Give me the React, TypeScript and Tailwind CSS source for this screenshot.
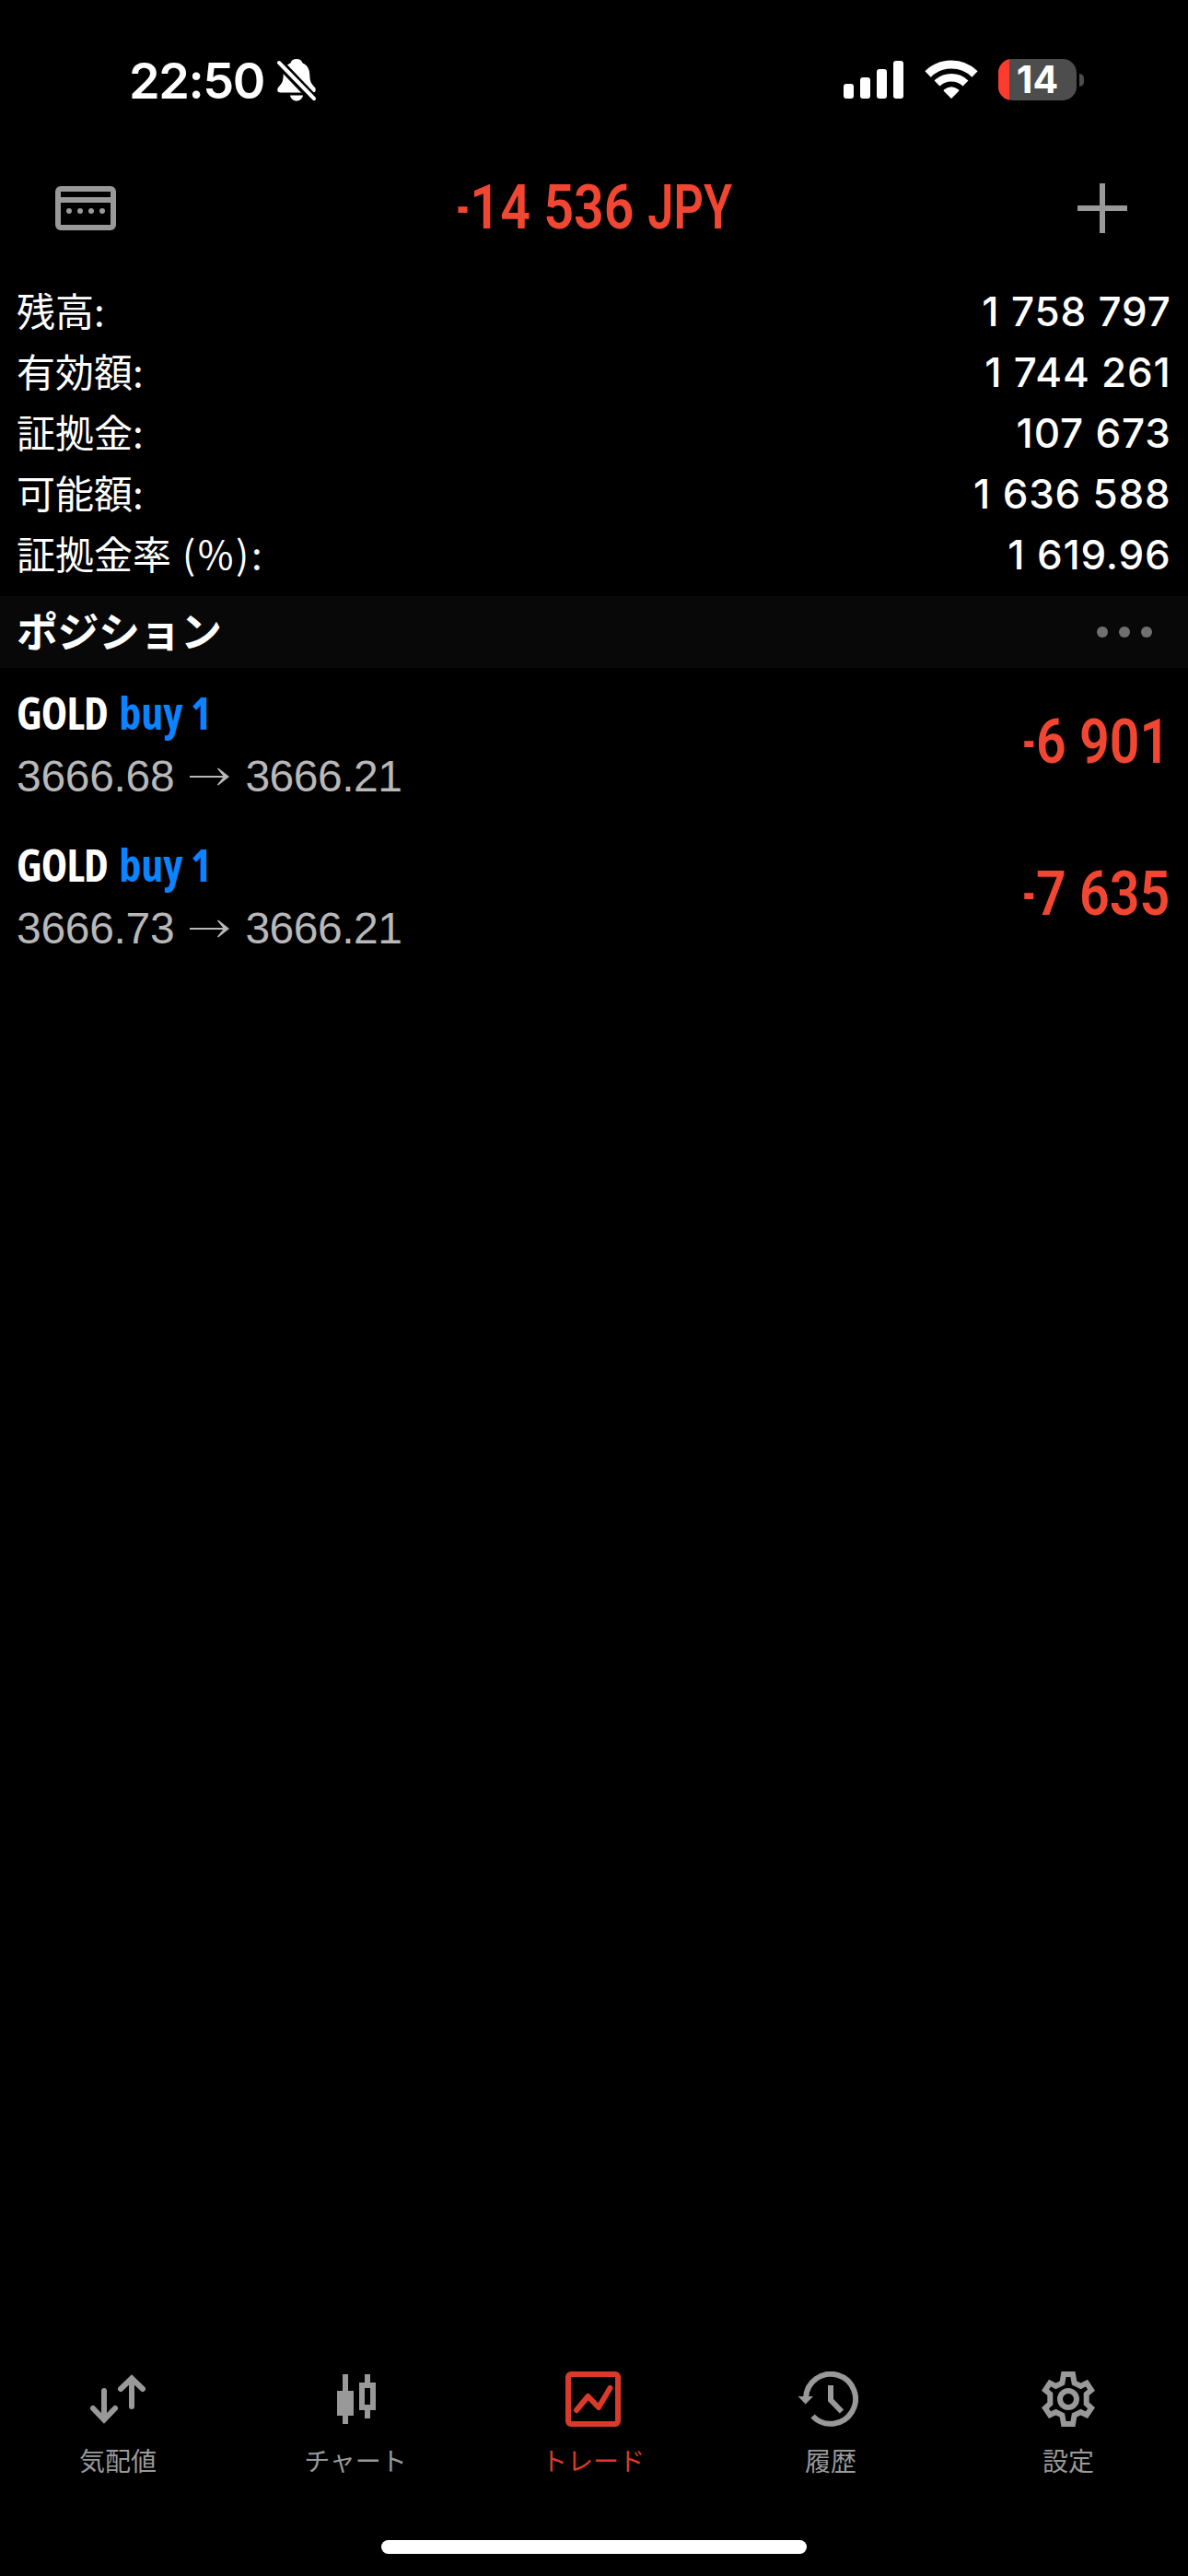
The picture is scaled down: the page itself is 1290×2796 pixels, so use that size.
import React from 'react';

interface SummaryRow {
  label: string;
  suffix?: string;
  value: string;
}

interface Position {
  symbol: string;
  side: string;
  open: string;
  current: string;
  profit: string;
}

const summary: SummaryRow[] = [
  { label: '残高:', value: '1 758 797' },
  { label: '有効額:', value: '1 744 261' },
  { label: '証拠金:', value: '107 673' },
  { label: '可能額:', value: '1 636 588' },
  { label: '証拠金率', suffix: ' (%):', value: '1 619.96' },
];

const positions: Position[] = [
  { symbol: 'GOLD', side: 'buy 1', open: '3666.68', current: '3666.21', profit: '6 901' },
  { symbol: 'GOLD', side: 'buy 1', open: '3666.73', current: '3666.21', profit: '7 635' },
];

const BellOffIcon = () => (
  <svg width="44" height="48" viewBox="0 0 44 48">
    <path
      fill="white"
      d="M22 1c-3.500 0-6 2-6.600 4.600C9.500 8 7.800 13 7.600 19.500 7.400 26 5.500 28 2.500 31.500 0 34.500 1.500 37.500 4.500 37.500h35c3 0 4.500-3 2-6C38.500 28 36.600 26 36.400 19.500 36.200 13 34.500 8 28.600 5.600 28 3 25.500 1 22 1z"
    />
    <path fill="white" d="M15 40.500h14c-.6 3.500-3.500 6-7 6s-6.400-2.500-7-6z" />
    <path d="M-2 0L42 46" stroke="black" strokeWidth="10" />
    <path d="M3 5L41 44" stroke="white" strokeWidth="4" strokeLinecap="round" />
  </svg>
);

const SignalIcon = () => (
  <svg className="mr-px" width="65" height="41" viewBox="0 0 65 41" fill="white">
    <rect x="0" y="25" width="11" height="16" rx="3" />
    <rect x="18" y="18" width="11" height="23" rx="3" />
    <rect x="36" y="9" width="11" height="32" rx="3" />
    <rect x="54" y="0" width="11" height="41" rx="3" />
  </svg>
);

const WifiIcon = () => (
  <svg width="58" height="43" viewBox="0 0 58 43" fill="none" stroke="white">
    <path d="M3.500 15.500A36.500 36.500 0 0 1 54.500 15.500" strokeWidth="9" />
    <path d="M13.500 25.500A22.300 22.300 0 0 1 44.500 25.500" strokeWidth="8.500" />
    <path d="M29 42L20.500 33.500Q20.500 32.500 21.500 32Q29 26.500 36.500 32Q37.500 32.500 37.500 33.500Z" fill="white" stroke="none" />
  </svg>
);

const Battery = () => (
  <div className="flex items-center">
    <div className="relative flex h-[45px] w-[85px] items-center justify-center">
      <div className="absolute inset-0 overflow-hidden rounded-[15px] bg-[#4d4d4d]">
        <div className="h-full w-3 bg-[#ff3b30]" />
      </div>
      <span className="relative text-[41px] font-bold leading-[45px] text-white">14</span>
    </div>
    <div className="ml-[3px] h-[14px] w-[5px] rounded-r-full bg-[#4d4d4d]" />
  </div>
);

const KeypadIcon = () => (
  <svg width="66" height="48" viewBox="0 0 66 48" fill="#999999">
    <rect x="3" y="3" width="60" height="42" rx="3" fill="none" stroke="#999999" strokeWidth="6" />
    <rect x="3" y="12" width="60" height="6" />
    <circle cx="15" cy="27" r="3" />
    <circle cx="27" cy="27" r="3" />
    <circle cx="39" cy="27" r="3" />
    <circle cx="51" cy="27" r="3" />
  </svg>
);

const PlusIcon = () => (
  <svg width="54" height="54" viewBox="0 0 54 54" stroke="#999999" strokeWidth="6">
    <path d="M27 0V54M0 27H54" />
  </svg>
);

const ArrowIcon = () => (
  <svg width="44" height="20" viewBox="0 0 44 20" fill="none" stroke="currentColor">
    <path d="M0 10H41" strokeWidth="2" />
    <path fill="currentColor" stroke="none" d="M43 10L31 0.500L30 1.500L37 10L30 18.500L31 19.500Z" />
  </svg>
);

const QuotesIcon = () => (
  <svg width="60" height="60" viewBox="0 0 60 60" fill="none" stroke="currentColor" strokeWidth="6" strokeLinecap="round">
    <path d="M15 21V52M3 40L15 52.500L27 40" />
    <path d="M45 38V8M33 19L45 7.500L57 19" />
  </svg>
);

const ChartIcon = () => (
  <svg width="60" height="60" viewBox="0 0 60 60" fill="currentColor">
    <path d="M16 3h6v18h6v27h-6v9h-6v-9h-6V21h6z" />
    <path fillRule="evenodd" d="M40 3h6v9h6v30h-6v9h-6v-9h-6V12h6zM40 18v18h6V18z" />
  </svg>
);

const TradeIcon = () => (
  <svg width="60" height="60" viewBox="0 0 60 60" fill="none" stroke="currentColor" strokeWidth="6">
    <rect x="3" y="3" width="54" height="54" rx="3" />
    <path d="M12 42L24.500 27L36 39L48.500 18" strokeLinecap="round" strokeLinejoin="round" />
  </svg>
);

const HistoryIcon = () => (
  <svg className="mr-1.5" width="66" height="60" viewBox="0 0 66 60" fill="none" stroke="currentColor" strokeWidth="6">
    <path d="M9 29A27 27 0 1 1 16.500 48.500" />
    <path d="M36 15V31L48 43.500" />
    <path d="M0.500 27H17L8.700 35.500Z" fill="currentColor" stroke="none" />
  </svg>
);

const gearOutline =
  'M22.500 0H37.500L39.300 10.500L43.500 12.500L51 8.700L59 20.700L52.700 26V33.500L59 39.300L51 51L43.500 47.500L39.300 49.500L37.500 60H22.500L20.700 49.500L16.500 47.500L9 51L1 39.300L7.300 33.500V26L1 20.700L9 8.700L16.500 12.500L20.700 10.500Z';

const SettingsIcon = () => (
  <svg width="60" height="60" viewBox="0 0 60 60" fill="none" stroke="currentColor">
    <clipPath id="gear">
      <path d={gearOutline} />
    </clipPath>
    <path d={gearOutline} strokeWidth="12" clipPath="url(#gear)" />
    <circle cx="30" cy="30" r="9" strokeWidth="6" />
  </svg>
);

// Condensed red amount with a short minus sign
const Loss = ({ value, currency }: { value: string; currency?: string }) => (
  <span className="whitespace-pre font-['Roboto',sans-serif] text-[66px] font-semibold leading-none text-[#f04632]">
    <span className="-ml-2 mr-px inline-block origin-right scale-x-[.65]">-</span>
    {value}
    {currency && (
      <>
        {' '}
        <span className="-mr-[14px] inline-block origin-left scale-x-[.88]">{currency}</span>
      </>
    )}
  </span>
);

const tabs = [
  { label: '気配値', icon: QuotesIcon },
  { label: 'チャート', icon: ChartIcon },
  { label: 'トレード', icon: TradeIcon, active: true },
  { label: '履歴', icon: HistoryIcon },
  { label: '設定', icon: SettingsIcon },
];

const App: React.FC = () => {
  return (
    <div className="flex h-[2796px] w-[1290px] flex-col overflow-hidden bg-black font-['Inter','Noto_Sans_CJK_JP',sans-serif] text-white">
      {/* Status bar */}
      <div className="flex h-[174px] items-center justify-between pb-[1px] pl-[140px] pr-[113px]">
        <div className="flex items-center gap-[13px]">
          <span className="pt-[2px] text-[54px] font-[560] leading-none tracking-[-1.4px]">22:50</span>
          <BellOffIcon />
        </div>
        <div className="flex items-center gap-[22px]">
          <SignalIcon />
          <WifiIcon />
          <Battery />
        </div>
      </div>

      {/* Header */}
      <div className="flex h-[104px] items-center justify-between pl-[60px] pr-[66px]">
        <KeypadIcon />
        <h1 className="mr-1.5 flex scale-x-[.87]">
          <Loss value="14 536" currency="JPY" />
        </h1>
        <PlusIcon />
      </div>

      {/* Account summary */}
      <div className="mt-[27px] h-[342px] pl-[18px] pr-[19px]">
        {summary.map((row) => (
          <div key={row.label} className="flex h-[66px] items-center justify-between">
            <span className="-mt-1 whitespace-pre font-['Noto_Sans_CJK_JP',sans-serif] text-[42px] leading-[66px]">
              {row.label}
              {row.suffix && <span className="tracking-[2.6px]">{row.suffix}</span>}
            </span>
            <span className="-mr-[0.6px] text-[44px] font-[460] leading-[66px] tracking-[0.8px]">{row.value}</span>
          </div>
        ))}
      </div>

      {/* Positions */}
      <div className="flex h-[78px] items-center justify-between bg-[#080808] pl-[18px] pr-[39px]">
        <h2 className="-mt-[5px] font-['Noto_Sans_CJK_JP',sans-serif] text-[45px] font-bold leading-none tracking-[-0.5px]">
          ポジション
        </h2>
        <div className="flex gap-3">
          <span className="size-3 rounded-full bg-[#707070]" />
          <span className="size-3 rounded-full bg-[#707070]" />
          <span className="size-3 rounded-full bg-[#707070]" />
        </div>
      </div>
      {positions.map((position, index) => (
        <div key={index} className="flex h-[165px] items-center justify-between pl-[18px] pr-[20px]">
          <div className="flex flex-col">
            <div className="flex h-[68px] items-center gap-[12px] font-['Open_Sans',sans-serif] text-[48px] font-bold leading-none [font-stretch:75%]">
              <span className="tracking-[-0.8px]">{position.symbol}</span>
              <span className="text-[#0a84ff]">{position.side}</span>
            </div>
            <div className="flex h-[68px] items-center gap-[17px] pt-[2px] font-['Liberation_Sans',sans-serif] text-[48px] leading-none text-[#b8b8b8]">
              <span className="tracking-[-0.3px]">{position.open}</span>
              <ArrowIcon />
              <span className="-ml-px tracking-[-0.5px]">{position.current}</span>
            </div>
          </div>
          <div className="-mt-[3px] flex origin-right scale-x-[.87]">
            <Loss value={position.profit} />
          </div>
        </div>
      ))}

      {/* Tab bar */}
      <nav className="-ml-px mt-auto grid h-[183px] w-full grid-cols-5">
        {tabs.map(({ label, icon: Icon, active }) => (
          <div
            key={label}
            className={`flex flex-col items-center ${active ? 'text-[#db3a2b]' : 'text-[#999999]'}`}
          >
            <Icon />
            <span className="mt-4 font-['Noto_Sans_CJK_JP',sans-serif] text-[28px] leading-[40px]">{label}</span>
          </div>
        ))}
      </nav>
      <div className="flex h-[39px] justify-center">
        <div className="h-[15px] w-[462px] rounded-full bg-white" />
      </div>
    </div>
  );
};

export default App;
